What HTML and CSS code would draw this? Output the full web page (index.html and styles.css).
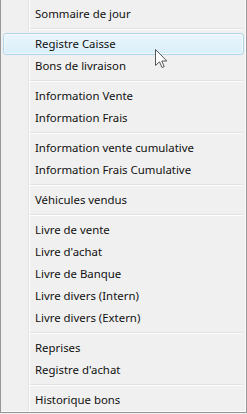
FILE: index.html
```html
<!DOCTYPE html>
<html lang="fr">

<head>
    <meta charset="UTF-8">
    <meta name="viewport" content="width=device-width, initial-scale=1.0">
    <title>Menu</title>

    <link rel="stylesheet" href="styles.css">
</head>

<body>
    <div class="menu">
        <div class="menu-item">Sommaire de jour</div>
        <div class="menu-sep"></div>
        <div class="menu-item hover">Registre Caisse</div>
        <div class="menu-item">Bons de livraison</div>
        <div class="menu-sep"></div>
        <div class="menu-item">Information Vente</div>
        <div class="menu-item">Information Frais</div>
        <div class="menu-sep"></div>
        <div class="menu-item">Information vente cumulative</div>
        <div class="menu-item">Information Frais Cumulative</div>
        <div class="menu-sep"></div>
        <div class="menu-item">Véhicules vendus</div>
        <div class="menu-sep"></div>
        <div class="menu-item">Livre de vente</div>
        <div class="menu-item">Livre d'achat</div>
        <div class="menu-item">Livre de Banque</div>
        <div class="menu-item">Livre divers (Intern)</div>
        <div class="menu-item">Livre divers (Extern)</div>
        <div class="menu-sep"></div>
        <div class="menu-item">Reprises</div>
        <div class="menu-item">Registre d'achat</div>
        <div class="menu-sep"></div>
        <div class="menu-item">Historique bons</div>

        <!-- curseur souris -->
        <svg class="cursor" width="13" height="20" viewBox="0 0 13 20">
            <path d="M0.5 0.5 L0.5 16.5 L4.5 12.8 L7 18.5 L9.2 17.6 L6.8 12 L11.8 12 Z" fill="#fff" stroke="#555"
                stroke-width="1" stroke-linejoin="miter"></path>
        </svg>
    </div>
</body>

</html>
```

FILE: styles.css
```css
html,
body {
    margin: 0;
    padding: 0;
    background: #f0f0f0;
}

.menu {
    position: relative;
    box-sizing: border-box;
    width: 247px;
    height: 413px;
    padding-top: 3px;
    border: 1px solid #979797;
    border-top: none;
    background: linear-gradient(to right, transparent 27px, #e2e3e3 27px, #e2e3e3 28px, #fff 28px, #fff 29px, transparent 29px), #f0f0f0;
    box-shadow: inset -1px -1px 0 #fafafa;
    font-family: "Noto Sans", "Open Sans", sans-serif;
    font-size: 11.4px;
    color: #111;
}

.menu-item {
    box-sizing: border-box;
    height: 22px;
    line-height: 20px;
    margin: 0 2px;
    padding-left: 31px;
    border: 1px solid transparent;
    border-radius: 3px;
    white-space: nowrap;
}

.menu-item.hover {
    border-color: #aed5ea;
    background: linear-gradient(#eaf5fb, #d9eef9);
    box-shadow: inset 0 0 0 1px rgba(255, 255, 255, 0.6);
}

.menu-sep {
    height: 8px;
    margin-left: 29px;
    margin-right: 3px;
    position: relative;
}

.menu-sep::after {
    content: "";
    position: absolute;
    left: 0;
    right: 0;
    top: 3px;
    height: 1px;
    background: #e0e0e0;
    border-bottom: 1px solid #fff;
}

.cursor {
    position: absolute;
    left: 154px;
    top: 49px;
}
```
